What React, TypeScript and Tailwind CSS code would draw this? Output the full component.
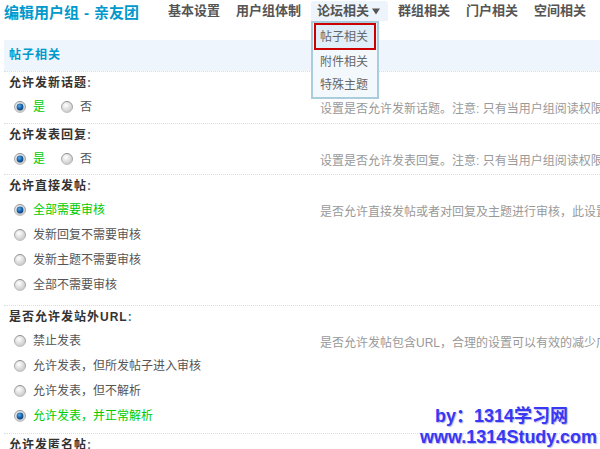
import React from "react";

function Radio({ checked }: { checked?: boolean }) {
  return (
    <svg width="12" height="12" viewBox="0 0 12 12" className="shrink-0">
      <defs>
        <radialGradient id="rOff" cx="40%" cy="35%" r="65%">
          <stop offset="0%" stopColor="#ffffff" />
          <stop offset="100%" stopColor="#c8c8c8" />
        </radialGradient>
        <linearGradient id="rRing" x1="0" y1="0" x2="0" y2="1">
          <stop offset="0%" stopColor="#8e8e8e" />
          <stop offset="100%" stopColor="#c4c4c4" />
        </linearGradient>
        <radialGradient id="rDot" cx="40%" cy="35%" r="70%">
          <stop offset="0%" stopColor="#5aa8e8" />
          <stop offset="60%" stopColor="#1460a8" />
          <stop offset="100%" stopColor="#0a3a70" />
        </radialGradient>
      </defs>
      <circle cx="6" cy="6" r="5.5" fill="url(#rOff)" stroke="url(#rRing)" strokeWidth="1" />
      {checked && <circle cx="6" cy="6" r="3.4" fill="url(#rDot)" />}
    </svg>
  );
}

type Opt = { text: string; on?: boolean };

function Section({
  label,
  desc,
  options,
  inline,
  pb = "pb-[4px]",
}: {
  label: string;
  desc: string;
  options: Opt[];
  inline?: boolean;
  pb?: string;
}) {
  return (
    <div className="border-t border-dotted border-[#c6e2f3]">
      <div className="h-[22px] pl-[5px] text-[12px] font-bold leading-[22px] tracking-[1px] text-[#333]">
        {label}
        <span className="text-[#4d6a86]">:</span>
      </div>
      <div className={`flex items-start ${pb}`}>
        <div className={`w-[316px] shrink-0 pl-[10px] ${inline ? "flex gap-[16px]" : ""}`}>
          {options.map((o) => (
            <div key={o.text} className="flex h-[25px] items-center gap-[7px] text-[12px]">
              <Radio checked={o.on} />
              <span className={o.on ? "text-[#00cc00]" : "text-[#555]"}>{o.text}</span>
            </div>
          ))}
        </div>
        <div className="h-[25px] whitespace-nowrap pt-[3px] text-[12px] leading-[25px] text-[#999]">{desc}</div>
      </div>
    </div>
  );
}

export default function App() {
  const nav = ["基本设置", "用户组体制"];
  const nav2 = ["群组相关", "门户相关", "空间相关"];
  return (
    <div className="relative h-[449px] w-[600px] overflow-hidden bg-white font-['Liberation_Sans','Noto_Sans_CJK_SC',sans-serif]">
      <div className="flex h-[40px] items-start pl-[4px]">
        <h1 className="w-[158px] shrink-0 pt-[3px] text-[15px] font-bold leading-[20px] text-[#0099cc]">
          编辑用户组<span className="mx-[5px]">-</span>亲友团
        </h1>
        <div className="mt-[1px] flex gap-[4px] text-[13px] font-bold leading-[20px] text-[#555]">
          {nav.map((n) => (
            <div key={n} className="h-[20px] px-[6px]">
              {n}
            </div>
          ))}
          <div className="relative z-10 flex h-[20px] items-center rounded-t-[3px] bg-[#eef4fb] pl-[6px] pr-[8px]">
            论坛相关
            <svg width="8" height="7" viewBox="0 0 8 7" className="ml-[3px]">
              <path d="M0 0.5 H8 L4 6.5 Z" fill="#555" />
            </svg>
            <div className="absolute left-0 top-[20px] w-[68px] border-2 border-[#a9cddc] bg-[#f3f8fd] px-[1px] text-[12px] font-normal text-[#666]">
              <div className="h-[27px] border-2 border-[#cc0000] bg-[#e0eef9] pl-[4px] leading-[24px]">帖子相关</div>
              <div className="h-[24px] pl-[6px] leading-[24px]">附件相关</div>
              <div className="h-[23px] pl-[6px] leading-[23px]">特殊主题</div>
            </div>
          </div>
          {nav2.map((n) => (
            <div key={n} className="h-[20px] px-[6px]">
              {n}
            </div>
          ))}
        </div>
      </div>

      <div className="ml-[4px]">
        <div className="h-[31px] bg-[#eff5fc] pl-[5px] text-[12px] font-bold leading-[31px] tracking-[1px] text-[#0099cc]">
          帖子相关
        </div>
        <Section
          label="允许发新话题"
          inline
          desc="设置是否允许发新话题。注意: 只有当用户组阅读权限高于 0 时，才能发新话题"
          options={[{ text: "是", on: true }, { text: "否" }]}
        />
        <Section
          label="允许发表回复"
          inline
          pb="pb-[3px]"
          desc="设置是否允许发表回复。注意: 只有当用户组阅读权限高于 0 时，才能发表回复"
          options={[{ text: "是", on: true }, { text: "否" }]}
        />
        <Section
          label="允许直接发帖"
          pb="pb-[8px]"
          desc="是否允许直接发帖或者对回复及主题进行审核，此设置只对普通用户有效"
          options={[
            { text: "全部需要审核", on: true },
            { text: "发新回复不需要审核" },
            { text: "发新主题不需要审核" },
            { text: "全部不需要审核" },
          ]}
        />
        <Section
          label="是否允许发站外URL"
          pb="pb-[5px]"
          desc="是否允许发帖包含URL，合理的设置可以有效的减少广告帖子的出现"
          options={[
            { text: "禁止发表" },
            { text: "允许发表，但所发帖子进入审核" },
            { text: "允许发表，但不解析" },
            { text: "允许发表，并正常解析", on: true },
          ]}
        />
        <Section
          label="允许发匿名帖"
          inline
          desc="是否允许用户匿名发表主题和回复"
          options={[{ text: "是" }, { text: "否", on: true }]}
        />
      </div>

      <div className="absolute left-[420px] top-[406px] text-[18px] font-bold leading-[21px] text-[#3838f4] [text-shadow:1px_1px_1px_#b4b4e4]">
        <div className="ml-[15px]">by：1314学习网</div>
        <div>www.1314Study.com</div>
      </div>
    </div>
  );
}
